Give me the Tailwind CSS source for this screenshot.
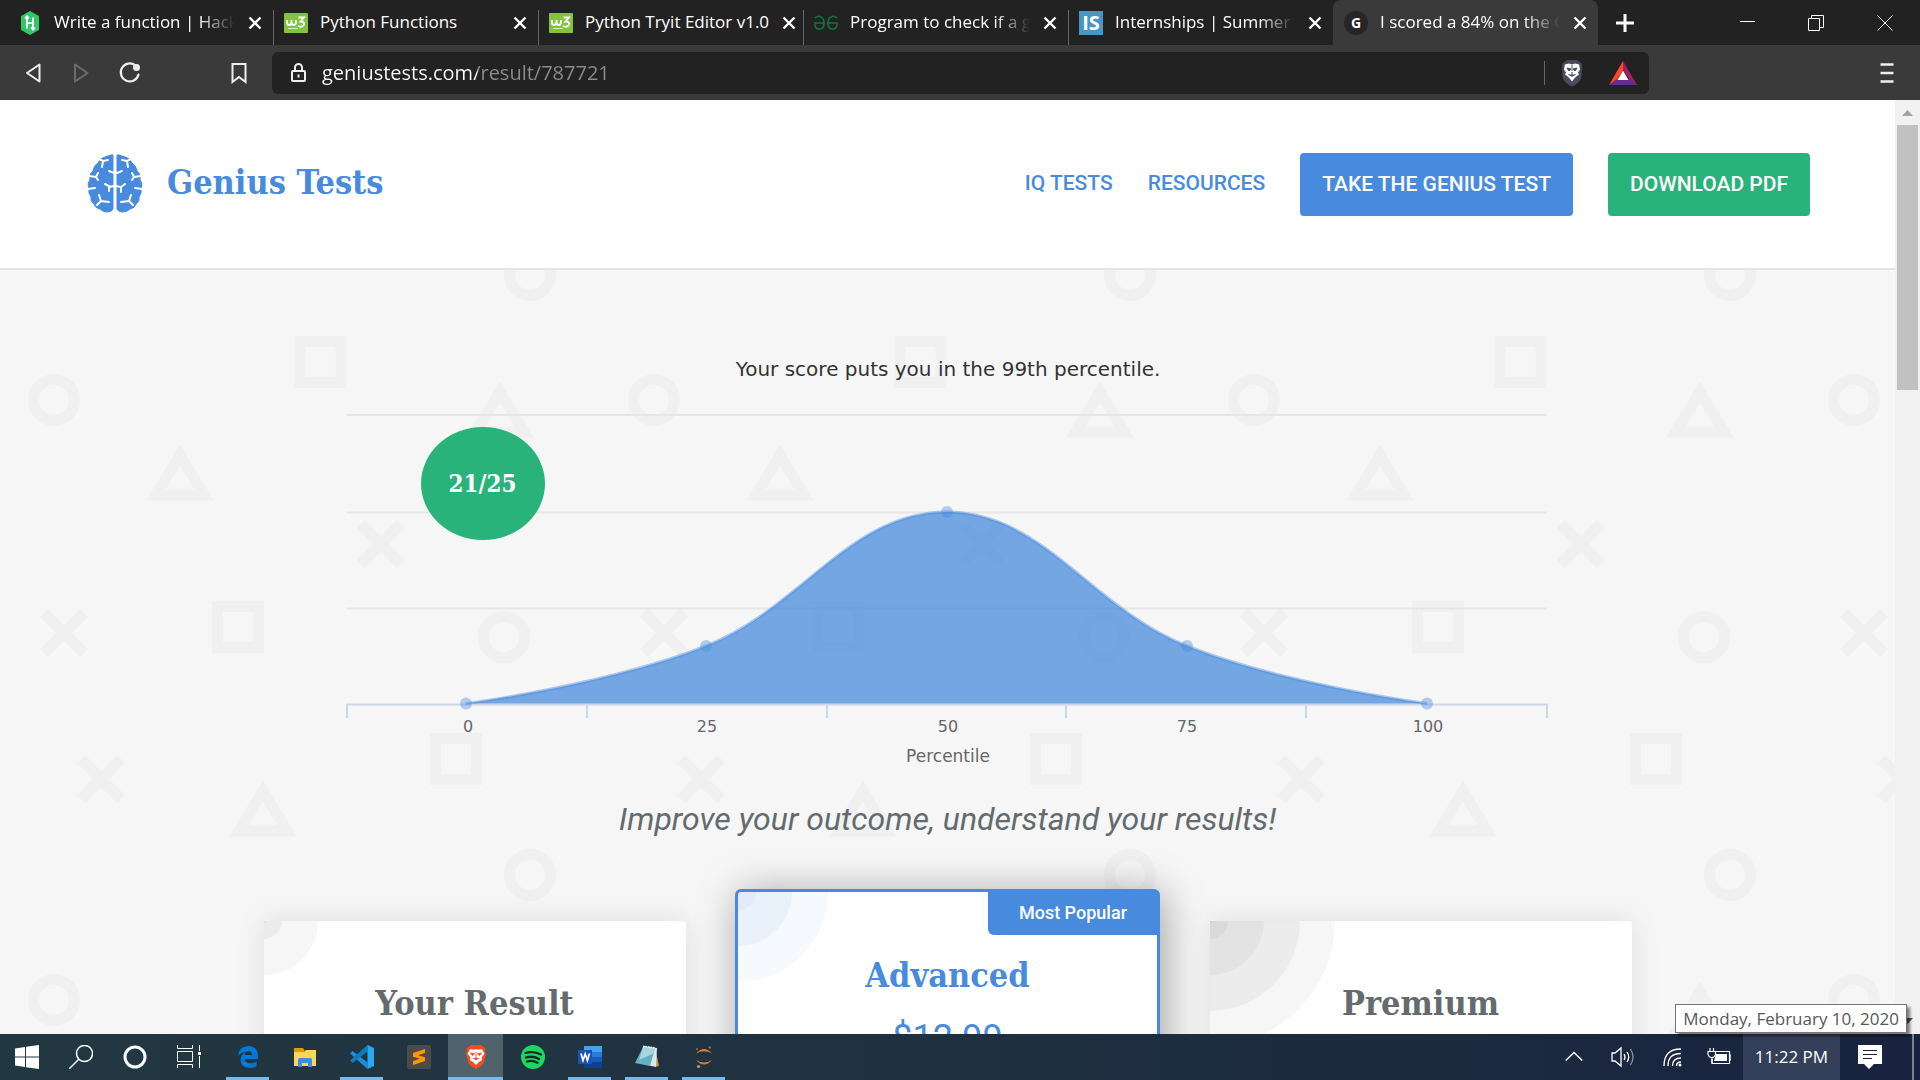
<!DOCTYPE html>
<html lang="en">
<head>
<meta charset="utf-8">
<title>I scored a 84% on the Genius Test</title>
<script src="https://cdn.jsdelivr.net/npm/@tailwindcss/browser@4"></script>
</head>
<body class="h-screen overflow-hidden flex flex-col bg-[#3a3a3a] font-['Open_Sans',sans-serif]">

<!-- Tab strip -->
<div class="flex h-[45px] shrink-0 bg-[#222222] pl-2 text-[17px] leading-6 text-white">
  <div class="flex w-[265px] items-center pl-[10px] pr-[10px] gap-3">
    <svg class="size-6 shrink-0" viewBox="0 0 24 24"><path d="M12 0l9 5v14l-9 5-9-5V5z" fill="#2ec866"/><path d="M9 5.500v12M15 6.500v12M9 12h6M7 7.500L9 5.500 11 7.500M13 16.500l2 2 2-2" stroke="#fff" stroke-width="2" fill="none"/></svg>
    <button class="flex-1 overflow-hidden whitespace-nowrap pb-[2px] text-left [mask-image:linear-gradient(to_right,#000_80%,transparent)]">Write a function | Hack</button>
    <button aria-label="Close tab" class="shrink-0"><svg class="size-4" viewBox="0 0 16 16"><path d="M2.500 2.500l11 11M13.500 2.500l-11 11" stroke="#fff" stroke-width="2.400"/></svg></button>
  </div>
  <div class="flex w-[265px] items-center pl-3 pr-[10px] gap-3">
    <div class="-ml-3 mt-[10px] h-[35px] w-px shrink-0 bg-[#666]"></div>
    <svg class="-ml-[2px] size-6 shrink-0" viewBox="0 0 24 24"><rect y="2" width="24" height="20" rx="1" fill="#83c43e"/><path d="M3 9v2q0 3 2.200 3T7.500 11V9v2q0 3 2.200 3T12 11V9M14.500 6.500H20l-3.500 4q4 0 3.500 3-1.500 3.500-6 1.500" fill="none" stroke="#fff" stroke-width="1.800"/><path d="M4 17.500h10" stroke="#fff" stroke-opacity=".7"/></svg>
    <button class="flex-1 overflow-hidden whitespace-nowrap pb-[2px] text-left">Python Functions</button>
    <button aria-label="Close tab" class="shrink-0"><svg class="size-4" viewBox="0 0 16 16"><path d="M2.500 2.500l11 11M13.500 2.500l-11 11" stroke="#fff" stroke-width="2.400"/></svg></button>
  </div>
  <div class="flex w-[265px] items-center pl-3 pr-[10px] gap-3">
    <div class="-ml-3 mt-[10px] h-[35px] w-px shrink-0 bg-[#666]"></div>
    <svg class="-ml-[2px] size-6 shrink-0" viewBox="0 0 24 24"><rect y="2" width="24" height="20" rx="1" fill="#83c43e"/><path d="M3 9v2q0 3 2.200 3T7.500 11V9v2q0 3 2.200 3T12 11V9M14.500 6.500H20l-3.500 4q4 0 3.500 3-1.500 3.500-6 1.500" fill="none" stroke="#fff" stroke-width="1.800"/><path d="M4 17.500h10" stroke="#fff" stroke-opacity=".7"/></svg>
    <button class="flex-1 whitespace-nowrap pb-[2px] text-left">Python Tryit Editor v1.0</button>
    <button aria-label="Close tab" class="shrink-0"><svg class="size-4" viewBox="0 0 16 16"><path d="M2.500 2.500l11 11M13.500 2.500l-11 11" stroke="#fff" stroke-width="2.400"/></svg></button>
  </div>
  <div class="flex w-[265px] items-center pl-3 pr-[10px] gap-3">
    <div class="-ml-3 mt-[10px] h-[35px] w-px shrink-0 bg-[#666]"></div>
    <svg class="-ml-[2px] size-6 shrink-0" viewBox="0 0 24 24" fill="none" stroke="#14703a" stroke-width="1.700"><path d="M1 7q2-2 5-1.500 4 1 4 6.500t-4 6q-4 .5-5-3.500V12h10M23 7q-2-2-5-1.500-4 1-4 6.500t4 6q4 .5 5-3.500V12H13"/></svg>
    <button class="flex-1 overflow-hidden whitespace-nowrap pb-[2px] text-left [mask-image:linear-gradient(to_right,#000_80%,transparent)]">Program to check if a g</button>
    <button aria-label="Close tab" class="shrink-0"><svg class="size-4" viewBox="0 0 16 16"><path d="M2.500 2.500l11 11M13.500 2.500l-11 11" stroke="#fff" stroke-width="2.400"/></svg></button>
  </div>
  <div class="flex w-[265px] items-center pl-3 pr-[10px] gap-3">
    <div class="-ml-3 mt-[10px] h-[35px] w-px shrink-0 bg-[#666]"></div>
    <span class="-ml-[2px] flex size-6 shrink-0 items-center justify-center bg-[#4595c5] text-xl font-bold leading-none">IS</span>
    <button class="flex-1 overflow-hidden whitespace-nowrap pb-[2px] text-left [mask-image:linear-gradient(to_right,#000_80%,transparent)]">Internships | Summer I</button>
    <button aria-label="Close tab" class="shrink-0"><svg class="size-4" viewBox="0 0 16 16"><path d="M2.500 2.500l11 11M13.500 2.500l-11 11" stroke="#fff" stroke-width="2.400"/></svg></button>
  </div>
  <div class="flex w-[265px] items-center rounded-t-lg bg-[#3a3a3a] pl-[11px] pr-[10px] gap-3">
    <span class="flex size-6 shrink-0 items-center justify-center rounded-full bg-[#262626] text-sm font-bold leading-none">G</span>
    <button class="flex-1 overflow-hidden whitespace-nowrap pb-[2px] text-left [mask-image:linear-gradient(to_right,#000_80%,transparent)]">I scored a 84% on the G</button>
    <button aria-label="Close tab" class="shrink-0"><svg class="size-4" viewBox="0 0 16 16"><path d="M2.500 2.500l11 11M13.500 2.500l-11 11" stroke="#fff" stroke-width="2.400"/></svg></button>
  </div>
  <button aria-label="New tab" class="ml-[17px]"><svg class="size-5" viewBox="0 0 20 20"><path d="M10 1v18M1 10h18" stroke="#fff" stroke-width="3"/></svg></button>
  <div class="ml-auto flex">
    <button aria-label="Minimize" class="flex w-[68px] items-center justify-center"><svg class="size-4" viewBox="0 0 16 16"><path d="M0 6.500h15" stroke="#fff"/></svg></button>
    <button aria-label="Restore" class="flex w-[68px] items-center justify-center"><svg class="size-4" viewBox="0 0 16 16" fill="none" stroke="#fff"><path d="M.5 3.500h11v12H.5zM3.500 3.500v-3h12v12h-4"/></svg></button>
    <button aria-label="Close" class="flex w-[70px] items-center justify-center"><svg class="size-4" viewBox="0 0 16 16"><path d="M.5.5l15 15M15.500.5l-15 15" stroke="#fff"/></svg></button>
  </div>
</div>

<!-- Toolbar -->
<div class="flex h-[55px] shrink-0 items-center pl-[22px] pr-[25px]">
  <button aria-label="Back"><svg class="size-6" viewBox="0 0 24 24"><path d="M17.500 3.500v17L5 12z" fill="none" stroke="#eee" stroke-width="2" stroke-linejoin="round"/></svg></button>
  <button aria-label="Forward" class="ml-6"><svg class="size-6" viewBox="0 0 24 24"><path d="M5 3.500v17L17.500 12z" fill="none" stroke="#6c6c6c" stroke-width="2" stroke-linejoin="round"/></svg></button>
  <button aria-label="Reload" class="ml-6"><svg class="size-6" viewBox="0 0 24 24"><path d="M17.500 4.500a9 9 0 1 0 3 9" fill="none" stroke="#eee" stroke-width="2.200" stroke-linecap="round"/><circle cx="18.500" cy="6.500" r="3.500" fill="#eee"/></svg></button>
  <button aria-label="Bookmark" class="ml-[85px]"><svg class="size-6" viewBox="0 0 24 24"><path d="M5.500 3h13v18l-6.500-5-6.500 5z" fill="none" stroke="#eee" stroke-width="2"/></svg></button>
  <div class="ml-[21px] flex h-[42px] w-[73.5%] items-center rounded-md bg-[#222222] pl-[14px] pr-3">
    <svg class="size-6 shrink-0" viewBox="0 0 24 24" fill="none" stroke="#eee" stroke-width="2"><rect x="6" y="10" width="13" height="10" rx="1"/><path d="M9 10V6.500a3.500 3.500 0 0 1 7 0V10M12.500 13.500v3"/></svg>
    <input aria-label="Address" value="geniustests.com/result/787721" class="ml-3 flex-1 bg-linear-to-r from-white from-[155px] to-[#8c8c8c] to-[156px] bg-clip-text text-xl leading-7 text-transparent outline-none">
    <div class="h-6 w-px bg-[#666]"></div>
    <button aria-label="Shields" class="ml-[15px]"><svg class="h-7 w-6" viewBox="0 0 24 28"><path d="M7 1h10l5 4-.5 13Q20 24 12 27.500 4 24 2.500 18L2 5z" fill="#4a4a5e"/><path d="M5 5.500l4-1 3 1 3-1 4 1 1 5-2 3 1 2-4 3-3 4-3-4-4-3 1-2-2-3z" fill="#fff"/><path d="M7 9l4 1-2 2zM17 9l-4 1 2 2zM12 6v6M12 13v3M8.500 15.500l3.500 1.800 3.500-1.800" stroke="#4a4a5e" fill="#4a4a5e"/></svg></button>
    <button aria-label="Rewards" class="ml-[25px]"><svg class="h-6 w-7" viewBox="0 0 28 24"><path d="M14 0v9L7 20.500 0 24z" fill="#ff4724"/><path d="M14 0l14 24-7-4.500L14 9z" fill="#9e1f63"/><path d="M0 24l7-5.500h14l7 5.500z" fill="#662d91"/><path d="M14 9.500l5.500 9.500h-11z" fill="#fff"/></svg></button>
  </div>
  <button aria-label="Menu" class="ml-auto"><svg class="h-5 w-4" viewBox="0 0 16 20"><path d="M1.500 1.500h13M1.500 10h13M1.500 18.500h13" stroke="#eee" stroke-width="2.400"/></svg></button>
</div>

<!-- Viewport -->
<div class="flex min-h-0 flex-1">
  <div class="flex min-w-0 flex-1 flex-col overflow-hidden">
    <header class="flex h-[170px] shrink-0 items-center justify-between border-b-2 border-[#e5e5e5] bg-white pl-[87px] pr-[85px]">
      <a href="#" class="flex items-center gap-6 pb-1">
        <svg class="h-[62px] w-14" viewBox="0 0 56 62">
          <path d="M26 4v54q-1 3-6 3-4 0-7-3-5-1-6-5-4-3-3-7-3-4-2-8-2-6 1-9-1-6 3-9 1-6 5-8 2-5 7-6 8-3 8-2z" fill="#488bde" stroke="#488bde" stroke-linejoin="round"/>
          <path d="M30 4v54q1 3 6 3 4 0 7-3 5-1 6-5 4-3 3-7 3-4 2-8 2-6-1-9 1-6-3-9-1-6-5-8-2-5-7-6-8-3-8-2z" fill="#488bde" stroke="#488bde" stroke-linejoin="round"/>
          <g fill="none" stroke="#fff" stroke-width="2" stroke-linecap="round"><path d="M12 8l4 2 5-1M16 10l-1 6M2 25l7 1 2-4M9 26l2 3M1 38l7-1M22 20l5 2h3l5-2M18 33l4 2v5M22 36l5-1h2l5 1v5M34 36l4-3M10 54l4-4-2-6M14 50l8 1M44 8l-4 2-5-1M40 10l1 6M54 25l-7 1-2-4M47 26l-2 3M55 38l-7-1M46 54l-4-4 2-6M42 50l-8 1"/></g>
        </svg>
        <span class="font-['Roboto_Slab','DejaVu_Serif_Condensed','DejaVu_Serif',serif] text-[34px] font-bold text-[#488bde]">Genius Tests</span>
      </a>
      <nav class="flex items-center gap-[35px] font-['Roboto',sans-serif] text-[21px] font-medium text-[#488bde]">
        <a href="#">IQ TESTS</a>
        <a href="#">RESOURCES</a>
        <a href="#" class="rounded bg-[#488bde] px-[22px] py-[18px] leading-[27px] text-white">TAKE THE GENIUS TEST</a>
        <a href="#" class="rounded bg-[#2ab27b] px-[22px] py-[18px] leading-[27px] text-white">DOWNLOAD PDF</a>
      </nav>
    </header>

    <main class="relative flex flex-1 flex-col items-center bg-[#f6f6f6]">
      <!-- Repeating shapes backdrop -->
      <svg class="absolute inset-0 size-full" aria-hidden="true">
        <defs><pattern id="shapes" width="600" height="600" patternUnits="userSpaceOnUse">
          <g fill="none" stroke="#f0f0f0" stroke-width="11">
            <circle cx="530" cy="5" r="20.500"/><circle cx="530" cy="605" r="20.500"/><circle cx="54" cy="130" r="20.500"/><circle cx="504" cy="367" r="20.500"/>
            <rect x="300" y="71.500" width="41" height="41"/><rect x="217.500" y="336.500" width="41" height="41"/><rect x="435.500" y="468.500" width="41" height="41"/>
            <path d="M180 185l24 40h-48zM500 122l24 40h-48zM263 521l24 40h-48z"/>
            <path d="M361 254l40 40m0-40l-40 40M44 343l40 40m0-40l-40 40M81 489l40 40m0-40l-40 40"/>
          </g>
        </pattern></defs>
        <rect width="100%" height="100%" fill="url(#shapes)"/>
      </svg>

      <figure class="relative h-[505px] w-full max-w-[1204px] shrink-0">
        <svg class="size-full" viewBox="0 0 1204 505" font-family="'DejaVu Sans',sans-serif" text-anchor="middle">
          <path d="M1 145h1200M1 242.500h1200M1 338.500h1200" stroke="#e6e6e6" stroke-width="2"/>
          <path d="M0 434.500h1202M1 435v13M241 435v13M481 435v13M720 435v13M960 435v13M1201 435v13" stroke="#ccd6eb" stroke-width="2" fill="none"/>
          <path d="M120 433.500C120 433.500 264 414.500 360 376 456 338 504 242 601 242 697 242 745 338 841 376 937 414.500 1081 433.500 1081 433.500z" fill="#488bde" fill-opacity=".75"/>
          <path d="M120 433.500C120 433.500 264 414.500 360 376 456 338 504 242 601 242 697 242 745 338 841 376 937 414.500 1081 433.500 1081 433.500" fill="none" stroke="#488bde" stroke-opacity=".45" stroke-width="3"/>
          <g fill="#488bde" fill-opacity=".4"><circle cx="120" cy="433.500" r="6"/><circle cx="360" cy="376" r="6"/><circle cx="601" cy="242" r="6"/><circle cx="841" cy="376" r="6"/><circle cx="1081" cy="433.500" r="6"/></g>
          <text x="602" y="106" font-size="20" fill="#333">Your score puts you in the 99th percentile.</text>
          <g font-size="16" fill="#666"><text x="122" y="462">0</text><text x="361" y="462">25</text><text x="602" y="462">50</text><text x="841" y="462">75</text><text x="1082" y="462">100</text></g>
          <text x="602" y="492" font-size="17" fill="#666">Percentile</text>
        </svg>
        <div class="absolute left-[75px] top-[157px] flex h-[113px] w-[124px] items-center justify-center rounded-[50%] bg-[#2ab27b] font-['Roboto_Slab','DejaVu_Serif_Condensed','DejaVu_Serif',serif] text-2xl font-bold text-white">21/25</div>
      </figure>

      <h2 class="relative mt-6 shrink-0 font-['Roboto',sans-serif] text-[32px] leading-10 italic text-[#636b6f]">Improve your outcome, understand your results!</h2>

      <section class="relative mt-[50px] flex w-full max-w-[1368px] items-start justify-between text-center font-['Roboto',sans-serif]">
        <article class="relative mt-8 h-[420px] w-[422px] rounded bg-white pt-16 shadow-[0_0_30px_rgba(0,0,0,0.1)]">
          <svg class="absolute left-0 top-0 size-[130px]" viewBox="0 0 130 130"><circle r="54" fill="#000" fill-opacity=".035"/><circle r="18" fill="#000" fill-opacity=".04"/></svg>
          <h3 class="font-['Roboto_Slab','DejaVu_Serif_Condensed','DejaVu_Serif',serif] text-[34px] font-bold leading-9 text-[#636b6f]">Your Result</h3>
        </article>
        <article class="relative h-[460px] w-[425px] rounded-md border-3 border-[#488bde] bg-white pt-[65px] shadow-[4px_4px_40px_rgba(0,0,0,0.35)]">
          <svg class="absolute left-0 top-0 size-[130px]" viewBox="0 0 130 130" fill="#488bde"><circle r="90" fill-opacity=".05"/><circle r="54" fill-opacity=".07"/><circle r="18" fill-opacity=".05"/></svg>
          <span class="absolute -right-px -top-px rounded-bl-md rounded-tr bg-[#488bde] px-[31px] py-2 text-lg font-medium text-white">Most Popular</span>
          <h3 class="font-['Roboto_Slab','DejaVu_Serif_Condensed','DejaVu_Serif',serif] text-[34px] font-bold leading-9 text-[#488bde]">Advanced</h3>
          <p class="mt-6 text-[36px] leading-[42px] text-[#488bde]">$12.99</p>
        </article>
        <article class="relative mt-8 h-[420px] w-[422px] rounded bg-white pt-16 shadow-[0_0_30px_rgba(0,0,0,0.1)]">
          <svg class="absolute left-0 top-0 size-[130px]" viewBox="0 0 130 130"><circle r="125" fill-opacity=".035"/><circle r="90" fill-opacity=".04"/><circle r="54" fill-opacity=".035"/><circle r="18" fill-opacity=".04"/></svg>
          <h3 class="font-['Roboto_Slab','DejaVu_Serif_Condensed','DejaVu_Serif',serif] text-[34px] font-bold leading-9 text-[#636b6f]">Premium</h3>
        </article>
      </section>
    </main>
  </div>
  <!-- Scrollbar -->
  <div class="flex w-[25px] shrink-0 flex-col items-center bg-[#f1f1f1]">
    <svg class="h-[25px] w-[21px]" viewBox="0 0 21 25"><path d="M5 16l5.500-6 5.500 6z" fill="#a3a3a3"/></svg>
    <div class="h-[265px] w-[21px] bg-[#c1c1c1]"></div>
    <svg class="mt-auto h-[25px] w-[21px]" viewBox="0 0 21 25"><path d="M5 9h11l-5.500 6z" fill="#505050"/></svg>
  </div>
</div>

<!-- Taskbar -->
<footer class="relative flex h-[46px] shrink-0 bg-linear-to-r from-[#223841] via-[#1f3040] to-[#19233f] text-white">
  <div class="flex pr-1">
    <button aria-label="Start" class="flex w-[54px] items-center justify-center"><svg class="size-6" viewBox="0 0 24 24" fill="#fff"><path d="M0 3.500L10 2v9.500H0zM11 1.800L24 0v11.500H11zM0 12.500h10V22L0 20.500zM11 12.500h13V24l-13-1.800z"/></svg></button>
    <button aria-label="Search" class="flex w-[54px] items-center justify-center"><svg class="size-6" viewBox="0 0 24 24" fill="none" stroke="#fff" stroke-width="1.500"><circle cx="15.500" cy="8.500" r="8"/><path d="M10 14L0 24"/></svg></button>
    <button aria-label="Cortana" class="flex w-[54px] items-center justify-center"><svg class="size-6" viewBox="0 0 24 24"><circle cx="12" cy="12" r="10" fill="none" stroke="#fff" stroke-width="3"/></svg></button>
    <button aria-label="Task view" class="flex w-[54px] items-center justify-center"><svg class="size-6" viewBox="0 0 24 24" fill="none" stroke="#fff"><path d="M.5 0v3.500h15V0M.5 6.500h15v10H.5zM.5 23v-3.500h15V23M22.500 0v6M22.500 11v12"/><path d="M21 7h3v3h-3z" fill="#fff" stroke="none"/></svg></button>
  </div>
  <div class="flex gap-[2px]">
    <button aria-label="Edge" class="relative flex w-[55px] items-center justify-center"><svg class="size-6" viewBox="0 0 24 24"><path d="M2 11Q3 1 12.500 1 22 1.500 22 11v3H8.500q.5 4 6 4.300 3.500 0 6-1.500v4.700q-3 1.500-7 1.500-9-.5-9-8.500Q5 9 10 7q-5 0-8 4zM8.500 10h7.500q0-4-3.500-4-3.500.5-4 4z" fill="#0078d7" fill-rule="evenodd"/></svg><i class="absolute bottom-0 h-[3px] w-[43px] bg-[#76b9ed]"></i></button>
    <button aria-label="File Explorer" class="flex w-[55px] items-center justify-center"><svg class="size-6" viewBox="0 0 24 24"><path d="M1 3h9l2 3-2 2H1z" fill="#e09c00"/><path d="M1 7h10l2-2h10v16H1z" fill="#ffd45c"/><path d="M5 22v-7q0-2 2-2h10q2 0 2 2v7h-4v-4H9v4z" fill="#3f8fd8"/></svg></button>
    <button aria-label="Visual Studio Code" class="relative flex w-[55px] items-center justify-center"><svg class="size-6" viewBox="0 0 24 24"><path d="M17.500 24L0 8.500 2.500 6l15 11.500z" fill="#1590dc"/><path d="M17.500 0v6.500L2.500 18 0 15.500z" fill="#0a7cc4"/><path d="M17.500 0L24 3v18l-6.500 3z" fill="#29a9f3"/></svg><i class="absolute bottom-0 h-[3px] w-[43px] bg-[#76b9ed]"></i></button>
    <button aria-label="Sublime Text" class="flex w-[55px] items-center justify-center"><svg class="size-6" viewBox="0 0 24 24"><rect width="24" height="24" rx="2" fill="#4b4b4b"/><path d="M6 8l12-4v4l-7 2.300 7 2V16L6 20v-4l7-2.200-7-2z" fill="#ff9800"/></svg></button>
    <button aria-label="Brave" class="relative flex w-[55px] items-center justify-center bg-[#4e636b]"><svg class="size-6" viewBox="0 0 24 24"><path d="M7 0h10l2 2 2.500 1L21 7l1 2-2.500 9Q18 21 12 24q-6-3-7.500-6L2 9l1-2-.5-4L5 2z" fill="#fb4a22"/><path d="M6 4l4 .8 2-.8 2 .8 4-.8 2.500 5-3 3.500.5 2.500-3 2-3 3-3-3-3-2 .5-2.500L3.500 9z" fill="#fff"/><path d="M6.500 8l4 .8-2 1.700zM17.500 8l-4 .8 2 1.700zM12 7v6M9 13l3 2 3-2" stroke="#fb4a22" fill="#fb4a22" stroke-width=".9"/></svg><i class="absolute inset-x-0 bottom-0 h-[3px] bg-[#76b9ed]"></i></button>
    <button aria-label="Spotify" class="flex w-[55px] items-center justify-center"><svg class="size-6" viewBox="0 0 24 24"><circle cx="12" cy="12" r="12" fill="#1ed760"/><path d="M4.500 8q8-2.500 15.500 1.500M5 12.500q7-2 13 1.500M6 16.500q5.500-1.500 10.500 1.200" fill="none" stroke="#142a22" stroke-width="2.300" stroke-linecap="round"/></svg></button>
    <button aria-label="Word" class="relative flex w-[55px] items-center justify-center"><svg class="size-6" viewBox="0 0 24 24"><path d="M6 1h18v6H6z" fill="#41a5ee"/><path d="M6 7h18v5H6z" fill="#2b7cd3"/><path d="M6 12h18v5H6z" fill="#185abd"/><path d="M6 17h18v6H6z" fill="#103f91"/><path d="M0 5h14v14H0z" fill="#1853b5"/><path d="M3 8.500l2 7 2.200-6.500 2.200 6.500 2-7" stroke="#fff" stroke-width="1.700" fill="none"/></svg><i class="absolute bottom-0 h-[3px] w-[43px] bg-[#76b9ed]"></i></button>
    <button aria-label="Notepad" class="relative flex w-[55px] items-center justify-center"><svg class="size-6" viewBox="0 0 24 24"><path d="M20 3l4 18-4 1z" fill="#c79a52"/><path d="M9 1l13 2-1 19-9-2z" fill="#dfe8ea"/><path d="M8 2l12 1.500L15 21 0 18z" fill="#62b0c2"/><path d="M8 2l12 1.500-1.500 5L4 15z" fill="#a5d5dd"/><path d="M8 1.500l12 1.500" stroke="#eee" stroke-width="2" stroke-dasharray="1.500 1"/></svg><i class="absolute bottom-0 h-[3px] w-[43px] bg-[#76b9ed]"></i></button>
    <button aria-label="Jupyter" class="relative flex w-[55px] items-center justify-center"><svg class="size-6" viewBox="0 0 24 24"><path d="M4 8.500q8-9 16 0-8-4.500-16 0zM4 15q8 9 16 0-8 5-16 0z" fill="#f37726"/><circle cx="17.800" cy="2.500" r="1.200" fill="#767677"/><circle cx="5" cy="4" r="1" fill="#767677"/><circle cx="6.500" cy="21.500" r="1.600" fill="#9e9e9e"/></svg><i class="absolute bottom-0 h-[3px] w-[43px] bg-[#76b9ed]"></i></button>
  </div>
  <div class="ml-auto flex items-stretch">
    <button aria-label="Show hidden icons" class="mr-7"><svg class="h-5 w-[18px]" viewBox="0 0 18 20"><path d="M.7 13.500L9 5.500l8.300 8" fill="none" stroke="#fff" stroke-width="1.500"/></svg></button>
    <button aria-label="Volume" class="mr-7"><svg class="size-6" viewBox="0 0 24 24" fill="none" stroke="#fff" stroke-width="1.300"><path d="M1 8h3l6-5v18l-6-5H1z"/><path d="M13 9q2 3 0 6M16 7q3.500 5 0 10"/><path d="M19.500 4q5 8 0 16" stroke="#8a93a3"/></svg></button>
    <button aria-label="Network" class="mr-6"><svg class="size-5" viewBox="0 0 20 20" fill="none" stroke="#fff" stroke-width="1.300"><path d="M1 19Q1 2 18 2M5 19Q5 6.500 18 6.500M9.500 19q0-8 8.500-8M13.500 19q0-4 4.500-4"/><circle cx="17" cy="18" r="1.500" fill="#fff" stroke="none"/></svg></button>
    <button aria-label="Battery" class="mr-3"><svg class="size-6" viewBox="0 0 24 24" fill="none" stroke="#fff" stroke-width="1.200"><path d="M8 6.500h14.500v12H5V14M22.500 10h1.500v5h-1.500"/><path d="M9 9h11v7H7z" fill="#fff" stroke="none"/><path d="M3 3v3M6.500 3v3M1 6.500h7.500V9Q8 12.500 4.800 12.500T1 9zM5 12v6"/></svg></button>
    <button class="flex w-[97px] items-center justify-center whitespace-nowrap bg-[#343f59] text-[17px]">11:22 PM</button>
    <button aria-label="Notifications" class="ml-[18px]"><svg class="size-6" viewBox="0 0 24 24"><path d="M0 0h24v19H16l-5 5-5-5H0z" fill="#fff"/><path d="M5 5.500h14M5 9.500h14M5 13.500h9" stroke="#19233f" stroke-width="1.200"/></svg></button>
    <div class="ml-[30px] mr-[6px] w-[2px] bg-[#7b8290]"></div>
  </div>
  <div role="tooltip" class="absolute bottom-[47px] right-[13px] border border-[#767676] bg-white px-[7px] text-[17px] leading-[27px] whitespace-nowrap text-[#575757] shadow-[3px_3px_3px_rgba(0,0,0,0.5)]">Monday, February 10, 2020</div>
</footer>
</body>
</html>
